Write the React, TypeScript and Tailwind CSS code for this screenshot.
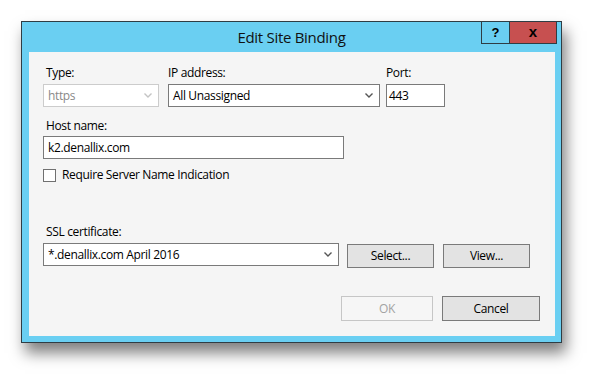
import React from "react";

const Chevron = ({ color }: { color: string }) => (
  <svg width="8" height="5" viewBox="0 0 8 5" className="shrink-0">
    <polyline points="0.5,0.5 4,4 7.5,0.5" fill="none" stroke={color} strokeWidth="1.4" />
  </svg>
);

export default function App() {
  return (
    <div
      className="w-[604px] h-[385px] bg-white overflow-hidden pt-[21px] pl-[21px]"
      style={{ fontFamily: '"Open Sans", "Noto Sans", sans-serif' }}
    >
      <div className="relative w-[541px] h-[322px] border border-[#2f3d44] bg-[#6acff2] shadow-[4px_10px_14px_rgba(0,0,0,0.5)] flex flex-col">
        {/* title bar */}
        <div className="h-[30px] flex items-center justify-center text-[15px] text-[#111] tracking-[-0.3px]">
          Edit Site Binding
        </div>
        <div className="absolute top-[-1px] right-[4px] flex">
          <div className="w-[29px] h-[23px] border border-[#2f3d44] bg-[#6acff2] flex items-center justify-center text-[13px] font-bold text-black leading-none" style={{ fontFamily: '"Liberation Sans", sans-serif' }}>
            ?
          </div>
          <div className="w-[47px] h-[23px] border border-l-0 border-[#2f3d44] bg-[#c75050] flex items-center justify-center text-[15px] font-bold text-black leading-none pb-[2px]" style={{ fontFamily: '"Liberation Sans", sans-serif' }}>
            x
          </div>
        </div>

        {/* content panel */}
        <div className="ml-[7px] mr-[6px] mb-[6px] flex-1 bg-[#f5f5f5] pl-[14px] pr-[15px] pt-[13px] flex flex-col text-[12px] leading-[16px] text-black tracking-[-0.35px]">
          {/* row 1 */}
          <div className="flex items-start">
            <div className="w-[116px] flex flex-col">
              <div className="pl-[3px] mb-[3px]">Type:</div>
              <div className="h-[23px] border border-[#cccccc] bg-white text-[#8a8a8a] pl-[4px] pr-[6px] flex items-center justify-between">
                <span>https</span>
                <Chevron color="#c4c4c4" />
              </div>
            </div>
            <div className="ml-[9px] w-[212px] flex flex-col">
              <div className="mb-[3px]">IP address:</div>
              <div className="h-[23px] border border-[#7a7a7a] bg-white pl-[4px] pr-[6px] flex items-center justify-between">
                <span>All Unassigned</span>
                <Chevron color="#555555" />
              </div>
            </div>
            <div className="ml-[6px] w-[59px] flex flex-col">
              <div className="mb-[3px]">Port:</div>
              <div className="h-[23px] border border-[#7a7a7a] bg-white pl-[2px] flex items-center">
                443
              </div>
            </div>
          </div>

          {/* host name */}
          <div className="mt-[11px] mb-[2px] pl-[3px]">Host name:</div>
          <div className="w-[301px] h-[23px] border border-[#7a7a7a] bg-white pl-[4px] flex items-center">
            k2.denallix.com
          </div>

          {/* checkbox */}
          <div className="mt-[8px] flex items-center h-[16px]">
            <div className="w-[13px] h-[13px] border border-[#707070] bg-white" />
            <span className="ml-[6px]">Require Server Name Indication</span>
          </div>

          {/* SSL */}
          <div className="mt-[41px] mb-[3px] pl-[3px]">SSL certificate:</div>
          <div className="flex items-start">
            <div className="w-[296px] h-[23px] border border-[#7a7a7a] bg-white pl-[4px] pr-[6px] flex items-center justify-between">
              <span>*.denallix.com April 2016</span>
              <Chevron color="#555555" />
            </div>
            <div className="ml-[8px] mt-[1px] w-[87px] h-[24px] border border-[#7a7a7a] bg-[#e3e3e3] flex items-center justify-center">
              Select...
            </div>
            <div className="ml-[9px] mt-[1px] w-[87px] h-[24px] border border-[#7a7a7a] bg-[#e3e3e3] flex items-center justify-center">
              View...
            </div>
          </div>

          {/* OK / Cancel */}
          <div className="mt-[28px] flex justify-end">
            <div className="w-[92px] h-[25px] border border-[#c6c6c6] bg-[#f6f6f6] text-[#a3a3a3] flex items-center justify-center">
              OK
            </div>
            <div className="ml-[9px] w-[98px] h-[25px] border border-[#7a7a7a] bg-[#e3e3e3] flex items-center justify-center">
              Cancel
            </div>
          </div>
        </div>
      </div>
    </div>
  );
}
